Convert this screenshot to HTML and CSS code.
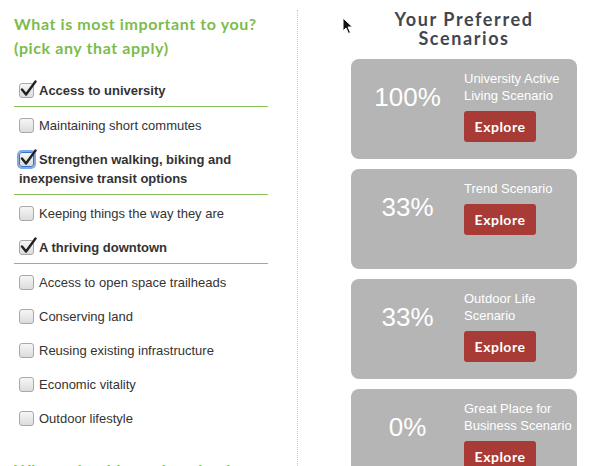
FILE: index.html
```html
<!DOCTYPE html>
<html lang="en">
<head>
    <meta charset="UTF-8">
    <title>Your Preferred Scenarios</title>
    <link rel="stylesheet" href="styles.css">
</head>
<body>
    <div class="page">
        <section class="priorities">
            <h2 class="question">What is most important to you?<br>(pick any that apply)</h2>
            <ul class="choices">
                <li class="choice checked"><label><span class="box"><svg class="tick" viewBox="0 0 18 18"><path d="M3 10.5 L7 15.5 L16.5 2.5"/></svg></span>Access to university</label></li>
                <li class="choice"><label><span class="box"></span>Maintaining short commutes</label></li>
                <li class="choice checked"><label><span class="box focused"><svg class="tick" viewBox="0 0 18 18"><path d="M3 10.5 L7 15.5 L16.5 2.5"/></svg></span>Strengthen walking, biking and inexpensive transit options</label></li>
                <li class="choice"><label><span class="box"></span>Keeping things the way they are</label></li>
                <li class="choice checked"><label><span class="box"><svg class="tick" viewBox="0 0 18 18"><path d="M3 10.5 L7 15.5 L16.5 2.5"/></svg></span>A thriving downtown</label></li>
                <li class="choice"><label><span class="box"></span>Access to open space trailheads</label></li>
                <li class="choice"><label><span class="box"></span>Conserving land</label></li>
                <li class="choice"><label><span class="box"></span>Reusing existing infrastructure</label></li>
                <li class="choice"><label><span class="box"></span>Economic vitality</label></li>
                <li class="choice"><label><span class="box"></span>Outdoor lifestyle</label></li>
            </ul>
            <h2 class="question next">Where should new housing be<br>built?</h2>
        </section>

        <aside class="scenarios">
            <h2 class="scenarios-title">Your Preferred<br>Scenarios</h2>
            <div class="card">
                <div class="score">100%</div>
                <div class="info">
                    <p class="name">University Active Living Scenario</p>
                    <a class="explore" href="#">Explore</a>
                </div>
            </div>
            <div class="card">
                <div class="score">33%</div>
                <div class="info">
                    <p class="name">Trend Scenario</p>
                    <a class="explore" href="#">Explore</a>
                </div>
            </div>
            <div class="card">
                <div class="score">33%</div>
                <div class="info">
                    <p class="name">Outdoor Life Scenario</p>
                    <a class="explore" href="#">Explore</a>
                </div>
            </div>
            <div class="card">
                <div class="score">0%</div>
                <div class="info">
                    <p class="name">Great Place for Business Scenario</p>
                    <a class="explore" href="#">Explore</a>
                </div>
            </div>
        </aside>
    </div>

    <!-- mouse pointer -->
    <svg class="pointer" width="12" height="18" viewBox="0 0 12 18">
        <path d="M1 1 L1 14 L4 11 L6.5 16.5 L8.5 15.5 L6 10 L10.5 10 Z" fill="#111" stroke="#fff" stroke-width="1"/>
    </svg>
</body>
</html>
```

FILE: styles.css
```css
html, body {
    margin: 0;
    padding: 0;
    height: 100%;
    overflow: hidden;
    background: #fff;
}
* {
    box-sizing: border-box;
}
body {
    font-family: "Liberation Sans", Arial, sans-serif;
    color: #333;
}
.page {
    display: flex;
    align-items: flex-start;
    padding-top: 10px;
}

/* left column */
.priorities {
    margin-left: 14px;
    width: 284px;
    padding-right: 29px;
    border-right: 1px dotted #c8c8c8;
    min-height: 520px;
    padding-top: 2px;
}
.question {
    margin: 0;
    font-family: Lato, sans-serif;
    font-weight: 700;
    font-size: 16px;
    line-height: 24px;
    letter-spacing: 0.6px;
    color: #7cbc4c;
    white-space: nowrap;
}
.question.next {
    margin-top: 24px;
}
.choices {
    list-style: none;
    margin: 12px 0 0 0;
    padding: 0;
}
.choice {
    padding: 9px 0 6px 5px;
    font-size: 13px;
    line-height: 19px;
}
.choice.checked {
    border-bottom: 1px solid #86c35a;
    font-weight: 700;
}
.choice label {
    display: block;
}
.box {
    position: relative;
    display: inline-block;
    width: 15px;
    height: 15px;
    margin-right: 5px;
    vertical-align: -3px;
    border: 1px solid #a8a8a8;
    border-radius: 3px;
    background: linear-gradient(#f6f6f6, #dcdcdc);
}
.box.focused {
    border-color: #3b6fc6;
    box-shadow: 0 0 0 2px #7fa9e8;
}
.tick {
    position: absolute;
    left: -1px;
    top: -5px;
    width: 18px;
    height: 18px;
}
.tick path {
    fill: none;
    stroke: #222;
    stroke-width: 2.4;
    stroke-linecap: round;
    stroke-linejoin: round;
}

/* right column */
.scenarios {
    padding-left: 53px;
    width: 280px;
}
.scenarios-title {
    margin: 0 0 11px 0;
    width: 226px;
    text-align: center;
    font-family: Lato, sans-serif;
    font-weight: 700;
    font-size: 18px;
    line-height: 19px;
    letter-spacing: 1.6px;
    color: #3f4750;
}
.card {
    display: flex;
    width: 226px;
    height: 100px;
    margin-bottom: 10px;
    background: #b5b5b5;
    border-radius: 8px;
    color: #fff;
}
.score {
    width: 113px;
    padding-top: 23px;
    text-align: center;
    font-size: 26px;
    line-height: 30px;
}
.info {
    width: 113px;
    padding-top: 11px;
}
.name {
    margin: 0 0 7px 0;
    font-size: 13px;
    line-height: 17px;
}
.explore {
    display: block;
    width: 72px;
    height: 31px;
    line-height: 31px;
    text-align: center;
    background: #a83b35;
    border-radius: 3px;
    color: #fff;
    text-decoration: none;
    font-family: Lato, sans-serif;
    font-weight: 700;
    font-size: 14px;
    letter-spacing: 0.5px;
}

.pointer {
    position: absolute;
    left: 342px;
    top: 17px;
}
```
